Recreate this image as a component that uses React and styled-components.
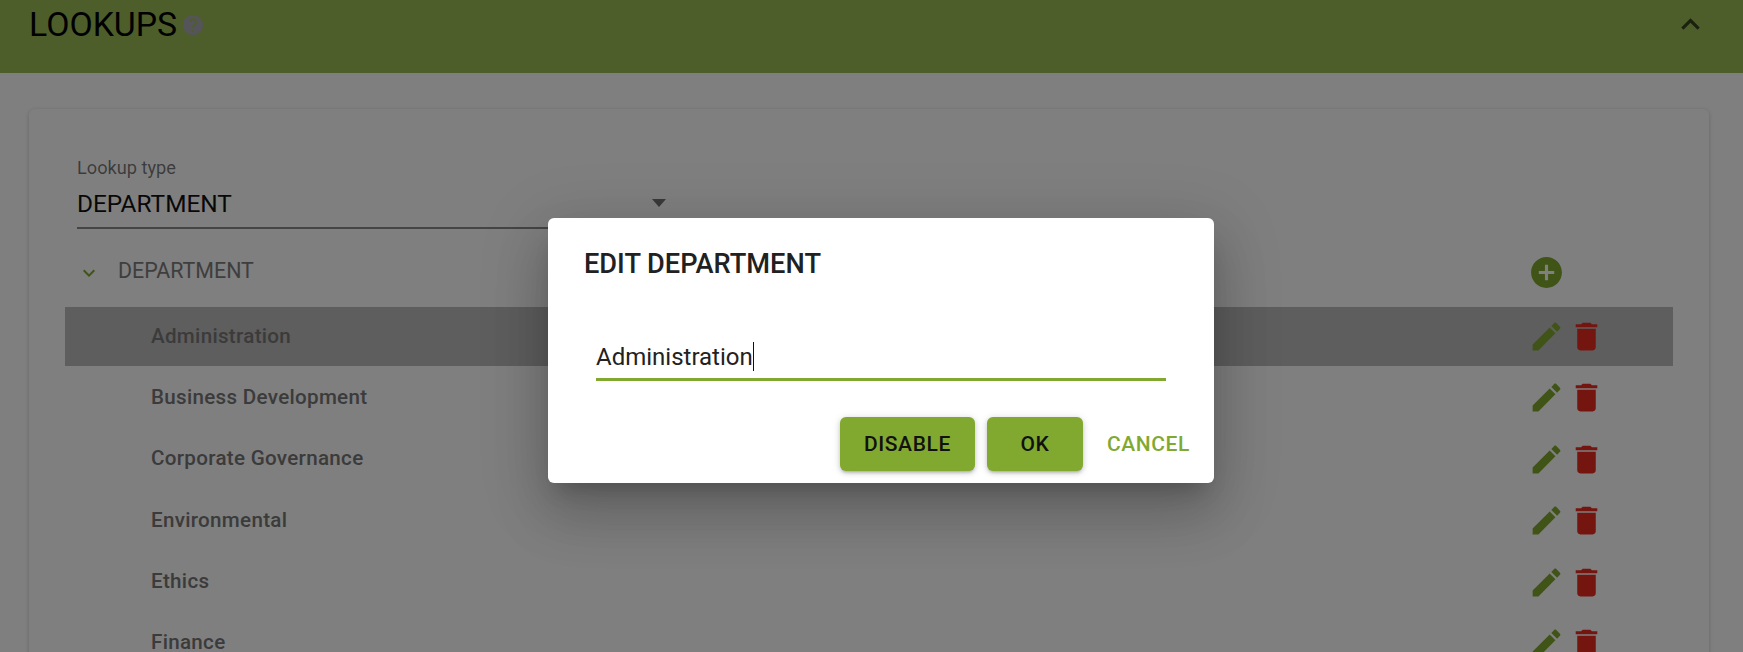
import React from "react";
import styled, { createGlobalStyle } from "styled-components";

const GlobalStyle = createGlobalStyle`
  html, body {
    margin: 0;
    padding: 0;
    background: #fff;
    font-family: Roboto, "Liberation Sans", sans-serif;
  }
`;

const Page = styled.div`
  position: relative;
  width: 1743px;
  height: 652px;
  overflow: hidden;
  background: #fefefe;
`;

const Header = styled.header`
  display: flex;
  justify-content: space-between;
  align-items: flex-start;
  height: 73px;
  box-sizing: border-box;
  padding: 6px 34px 0 29px;
  background: #9abc56;
`;

const TitleRow = styled.div`
  display: flex;
  align-items: center;
  gap: 4px;
`;

const Title = styled.h1`
  margin: 0;
  font-size: 33.8px;
  font-weight: 400;
  line-height: 37px;
  color: #000;
`;

const Main = styled.main`
  padding: 36px 34px 0 29px;
`;

const Card = styled.section`
  padding: 48px 36px 0;
  border-radius: 6px;
  background: #fefefe;
  box-shadow: 0 1px 4px rgba(0, 0, 0, 0.2);
`;

const SelectField = styled.div`
  width: 597px;
  margin-left: 12px;
  border-bottom: 2px solid #8a8a8a;
`;

const SelectLabel = styled.div`
  font-size: 18.2px;
  line-height: 22px;
  color: rgba(0, 0, 0, 0.54);
`;

const SelectValue = styled.div`
  display: flex;
  justify-content: space-between;
  align-items: center;
  height: 48px;
  font-size: 24.4px;
  color: #111;
`;

const Arrow = styled.span`
  width: 0;
  height: 0;
  margin-right: 8px;
  border-left: 7px solid transparent;
  border-right: 7px solid transparent;
  border-top: 8px solid #757575;
`;

const GroupHead = styled.div`
  display: flex;
  align-items: center;
  gap: 17px;
  margin-top: 25px;
  margin-bottom: 16px;
  padding: 0 68px 0 12px;
`;

const GroupName = styled.span`
  flex: 1;
  padding-bottom: 5px;
  font-size: 21.4px;
  color: #7c7c7c;
`;

const Row = styled.div`
  display: flex;
  align-items: center;
  height: 59px;
  margin-bottom: 2.4px;
  padding: 0 68px 0 86px;
  background: ${(p) => (p.$selected ? "#bcbcbc" : "transparent")};
`;

const RowName = styled.span`
  flex: 1;
  padding-bottom: 2px;
  font-size: 20.6px;
  font-weight: 500;
  letter-spacing: 0.3px;
  color: #777;
`;

const Actions = styled.div`
  display: flex;
  gap: 3px;
  width: 77px;
`;

const Icon = styled.svg`
  display: block;
  flex: none;
  width: ${(p) => p.$size || 37}px;
  height: ${(p) => p.$size || 37}px;
  fill: ${(p) => p.$color || "currentColor"};
`;

const Overlay = styled.div`
  position: absolute;
  inset: 0;
  padding: 218px 0 0 548px;
  background: rgba(0, 0, 0, 0.5);
`;

const Dialog = styled.div`
  width: 666px;
  height: 265px;
  box-sizing: border-box;
  padding: 31px 24px 12px 36px;
  border-radius: 6px;
  background: #fff;
  box-shadow: 0 15px 21px -10px rgba(0, 0, 0, 0.2), 0 33px 53px 4px rgba(0, 0, 0, 0.14),
    0 13px 64px 11px rgba(0, 0, 0, 0.12);
`;

const DialogTitle = styled.h2`
  margin: 0;
  font-size: 27.2px;
  font-weight: 500;
  line-height: 30px;
  color: #212121;
`;

const Field = styled.div`
  width: 570px;
  margin: 63px 0 0 12px;
  padding-bottom: 7px;
  border-bottom: 3px solid #82a92f;
`;

const FieldText = styled.span`
  display: block;
  width: fit-content;
  padding-top: 1px;
  height: 28px;
  font-size: 24px;
  line-height: 29px;
  color: #222;
  border-right: 1px solid #111;
`;

const DialogActions = styled.div`
  display: flex;
  justify-content: flex-end;
  gap: 12px;
  margin-top: 36px;
`;

const Button = styled.button`
  height: 54px;
  width: ${(p) => p.$width}px;
  padding: 0;
  border: 0;
  border-radius: 6px;
  font-family: inherit;
  font-size: 21px;
  font-weight: 500;
  letter-spacing: 0.6px;
  color: #111;
  background: #82a92f;
  box-shadow: 0 3px 3px -2px rgba(0, 0, 0, 0.2), 0 2px 5px 0 rgba(0, 0, 0, 0.14),
    0 1px 8px 0 rgba(0, 0, 0, 0.12);
`;

const TextButton = styled.button`
  height: 54px;
  margin-left: 12px;
  padding: 0;
  border: 0;
  background: none;
  font-family: inherit;
  font-size: 21px;
  font-weight: 500;
  letter-spacing: 0.6px;
  color: #82a92f;
`;

const GREEN = "#82a92f";
const RED = "#e82c1e";

const Svg = ({ d, size, color }) => (
  <Icon viewBox="0 0 24 24" $size={size} $color={color}>
    <path d={d} />
  </Icon>
);

const paths = {
  less: "M7.41 15.41 12 10.83l4.59 4.58L18 14l-6-6-6 6z",
  more: "M7.41 8.59 12 13.17l4.59-4.58L18 10l-6 6-6-6z",
  help: "M12 2C6.48 2 2 6.48 2 12s4.48 10 10 10 10-4.48 10-10S17.52 2 12 2zm1 17h-2v-2h2v2zm2.07-7.75l-.9.92C13.45 12.9 13 13.5 13 15h-2v-.5c0-1.1.45-2.1 1.17-2.83l1.24-1.26c.37-.36.59-.86.59-1.41 0-1.1-.9-2-2-2s-2 .9-2 2H8c0-2.21 1.79-4 4-4s4 1.79 4 4c0 .88-.36 1.68-.93 2.25z",
  add: "M12 2C6.48 2 2 6.48 2 12s4.48 10 10 10 10-4.48 10-10S17.52 2 12 2zm5 11h-4v4h-2v-4H7v-2h4V7h2v4h4v2z",
  edit: "M3 17.25V21h3.75L17.81 9.94l-3.75-3.75L3 17.25zM20.71 7.04c.39-.39.39-1.02 0-1.41l-2.34-2.34c-.39-.39-1.02-.39-1.41 0l-1.83 1.83 3.75 3.75 1.83-1.83z",
  trash: "M6 19c0 1.1.9 2 2 2h8c1.1 0 2-.9 2-2V7H6v12zM19 4h-3.5l-1-1h-5l-1 1H5v2h14V4z",
};

const departments = [
  "Administration",
  "Business Development",
  "Corporate Governance",
  "Environmental",
  "Ethics",
  "Finance",
];

export default function App() {
  return (
    <Page>
      <GlobalStyle />
      <Header>
        <TitleRow>
          <Title>LOOKUPS</Title>
          <Svg d={paths.help} size={24} color="#a8a8b2" />
        </TitleRow>
        <Svg d={paths.less} color="rgba(0,0,0,0.65)" />
      </Header>
      <Main>
        <Card>
          <SelectField>
            <SelectLabel>Lookup type</SelectLabel>
            <SelectValue>
              DEPARTMENT
              <Arrow />
            </SelectValue>
          </SelectField>
          <GroupHead>
            <Svg d={paths.more} size={24} color={GREEN} />
            <GroupName>DEPARTMENT</GroupName>
            <Actions>
              <Svg d={paths.add} color={GREEN} />
            </Actions>
          </GroupHead>
          {departments.map((name, i) => (
            <Row key={name} $selected={i === 0}>
              <RowName>{name}</RowName>
              <Actions>
                <Svg d={paths.edit} color={GREEN} />
                <Svg d={paths.trash} color={RED} />
              </Actions>
            </Row>
          ))}
        </Card>
      </Main>
      <Overlay>
        <Dialog>
          <DialogTitle>EDIT DEPARTMENT</DialogTitle>
          <Field>
            <FieldText>Administration</FieldText>
          </Field>
          <DialogActions>
            <Button $width={135}>DISABLE</Button>
            <Button $width={96}>OK</Button>
            <TextButton>CANCEL</TextButton>
          </DialogActions>
        </Dialog>
      </Overlay>
    </Page>
  );
}
